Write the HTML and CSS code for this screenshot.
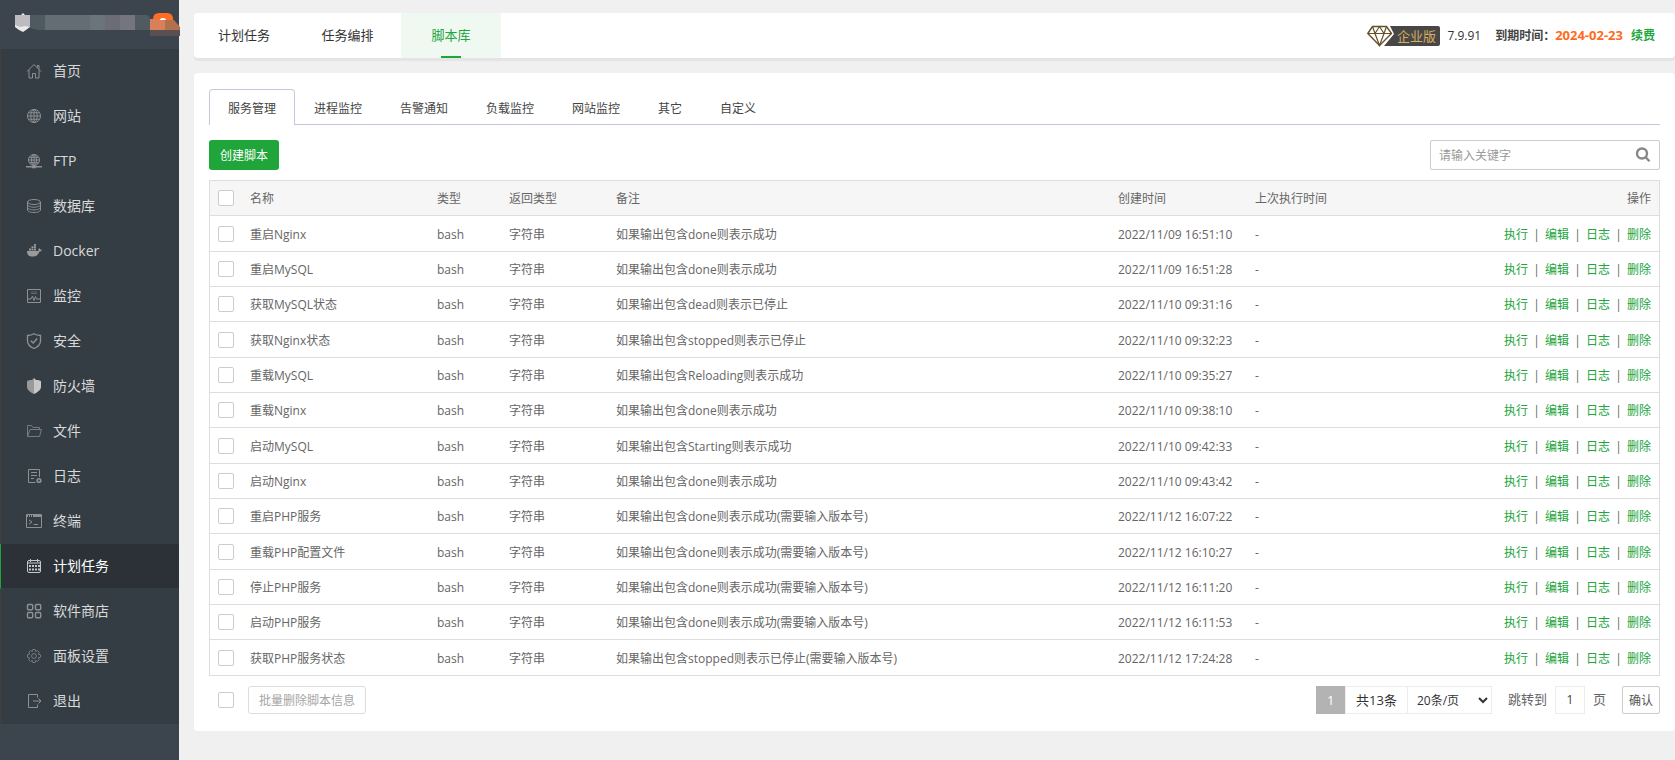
FILE: index.html
```html
<!DOCTYPE html>
<html lang="zh-CN">
<head>
<meta charset="utf-8">
<title>脚本库</title>
<link rel="stylesheet" href="styles.css">
</head>
<body>
<div class="app">
  <aside class="sidebar">
    <header class="brand">
      <svg class="brand-art" viewBox="0 0 180 49" aria-hidden="true">
        <path fill="#e9e9eb" d="M23 13l2 2h5v12l-4 3-3 2-4-2-4-3V15h6z"/>
        <path fill="#bcbbc0" d="M15 15h15v12l-5-1-5 1-5-2z"/>
        <path fill="#4f5960" d="M30 15h15v15H38l-8-2z"/>
        <path fill="#656d74" d="M45 15h45v15H45z"/>
        <path fill="#6b747b" d="M90 15h15v15H90z"/>
        <path fill="#6b6c77" d="M105 15h15v15h-15z"/>
        <path fill="#74757f" d="M120 15h15v15h-15z"/>
        <path fill="#505a62" d="M135 15h13l2 3v12h-15z"/>
        <path fill="#ff6d24" d="M153 19q0-6 6-6h8q6 0 6 6v4h-20z"/>
        <path fill="#fff" d="M160 20q0-2 3-2t3 2z"/>
        <path fill="#d8805a" d="M150 19h9l1 1h5v10h-15z"/>
        <path fill="#b3704d" d="M165 20h9l6 7v3h-15z"/>
        <path fill="#595052" d="M150 30h30v6h-30z"/>
      </svg>
    </header>
    <nav class="menu">
      <a class="menu-item" href="#"><svg class="icon" viewBox="0 0 16 16"><path d="M1 8.500L8 1.500l7 7M3 7v8h3.500v-4.500h3V15H13V7M11.500 4.500V2.500H13V6"/></svg>首页</a>
      <a class="menu-item" href="#"><svg class="icon" viewBox="0 0 16 16"><circle cx="8" cy="8" r="6.500"/><ellipse cx="8" cy="8" rx="3.200" ry="6.500"/><path d="M8 1.500v13M1.500 8h13M2.500 4.800h11M2.500 11.200h11"/></svg>网站</a>
      <a class="menu-item" href="#"><svg class="icon" viewBox="0 0 16 16"><circle cx="8" cy="7" r="5.500"/><ellipse cx="8" cy="7" rx="2.500" ry="5.500"/><path d="M8 1.500v12M2.500 7h11M3.500 4.300h9M3.500 9.700h9"/><path d="M0 13.800h16M6 14.500h4" stroke-width="1.500"/></svg>FTP</a>
      <a class="menu-item" href="#"><svg class="icon" viewBox="0 0 16 16"><ellipse cx="8" cy="4" rx="6.500" ry="2.500"/><path d="M1.500 4v8c0 1.400 3 2.500 6.500 2.500s6.500-1.100 6.500-2.500V4M1.500 6.700C1.500 8 4.500 9.200 8 9.200s6.500-1.200 6.500-2.500M1.500 9.400C1.500 10.700 4.500 11.900 8 11.900s6.500-1.200 6.500-2.500"/></svg>数据库</a>
      <a class="menu-item" href="#"><svg class="icon icon-solid" viewBox="0 0 16 16"><path d="M1 8h10.500c.8 0 1.200-.6 1-2l.8-1 .9 1.600 1.800.2c-.4 1.200-1.200 1.800-2.500 1.800-1.200 3.400-3.500 5-7 5C3 13.600 1 12 1 8zM3 5.500h2v2H3zM5.500 5.500h2v2h-2zM8 5.500h2v2H8zM5.500 3.200h2v1.700h-2zM8 3.200h2v1.700H8zM8 1h2v1.700H8z"/></svg>Docker</a>
      <a class="menu-item" href="#"><svg class="icon" viewBox="0 0 16 16"><path d="M1.500 1.500h13v13h-13zM2 11h3l1.500-3L8 12.500l1.500-4 1 2.500H14"/><path d="M5 4h6M5 5.500h6" opacity=".5"/></svg>监控</a>
      <a class="menu-item" href="#"><svg class="icon" viewBox="0 0 16 16"><path stroke-width="1.300" d="M8 .8c2 1.300 4 1.700 6.500 1.700v5.500c0 3.500-3 6-6.500 7.500C4.500 14 1.500 11.500 1.500 8V2.500C4 2.500 6 2.100 8 .8z"/><path stroke-width="1.500" d="M4.800 7.800L7.200 10l4-4.500"/></svg>安全</a>
      <a class="menu-item" href="#"><svg class="icon icon-solid" viewBox="0 0 16 16"><path d="M8 0L6 2H4L1 3v6c0 3 4 5.500 7 7z"/><path fill="#c7c8ca" d="M8 0l2 2h2l3 1v6c0 3-4 5.500-7 7z"/></svg>防火墙</a>
      <a class="menu-item icon-dim" href="#"><svg class="icon" viewBox="0 0 16 16"><path d="M1.500 13.500v-11h4l1.500 2h6.500v2M1.500 13.500l2.500-7h11.500l-2 7z"/></svg>文件</a>
      <a class="menu-item" href="#"><svg class="icon" viewBox="0 0 16 16"><path d="M9.500 14.500h-7v-13h11V9M5 4.500h6M5 7.500h6M5 10.500h3"/><circle cx="13" cy="12.500" r="1.800" stroke-width="1.600"/></svg>日志</a>
      <a class="menu-item" href="#"><svg class="icon" viewBox="0 0 16 16"><path d="M.5 1.500h15v13H.5zM3 7l3 2-3 2.300M7.500 11.500H12"/><path stroke-width="2" d="M1 3h14" stroke-dasharray="1 1 1 1 1 1 10"/></svg>终端</a>
      <a class="menu-item active" href="#"><svg class="icon" viewBox="0 0 16 16"><rect x="1.500" y="2.500" width="13" height="12" rx="1.500"/><path d="M2 5h12" /><path d="M4.500 1v3M11.500 1v3"/><path stroke-width="2" stroke-dasharray="2 1" d="M3 8h11M3 11.500h11"/></svg>计划任务</a>
      <a class="menu-item" href="#"><svg class="icon" viewBox="0 0 16 16"><g stroke-width="1.400"><rect x="1.500" y="1.500" width="5.200" height="5.200" rx="1"/><rect x="9.500" y="1.500" width="5.200" height="5.200" rx="1"/><rect x="1.500" y="9.500" width="5.200" height="5.200" rx="1"/><rect x="9.500" y="9.500" width="5.200" height="5.200" rx="1"/></g></svg>软件商店</a>
      <a class="menu-item icon-dim" href="#"><svg class="icon" viewBox="0 0 16 16"><path d="M6.800 1.500h2.400l.5 2 1.700-1 1.900 1.900-1 1.700 2.200.7v2.400l-2.200.7 1 1.700-1.900 1.900-1.700-1-.5 2H6.800l-.5-2-1.700 1-1.900-1.900 1-1.700-2.200-.7V6.800l2.200-.7-1-1.700 1.900-1.900 1.700 1z"/><circle cx="8" cy="8" r="2.400"/></svg>面板设置</a>
      <a class="menu-item" href="#"><svg class="icon" viewBox="0 0 16 16"><path d="M11.500 4.500v-3h-9v13h9v-3M7 8h8M12.500 5.500L15 8l-2.500 2.500"/></svg>退出</a>
    </nav>
  </aside>

  <main class="content">
    <header class="topbar">
      <nav class="top-tabs">
        <a class="top-tab" href="#">计划任务</a>
        <a class="top-tab top-tab-wide" href="#">任务编排</a>
        <a class="top-tab active" href="#">脚本库</a>
      </nav>
      <div class="license">
        <svg class="edition" viewBox="0 0 73 22" role="img" aria-label="企业版">
          <path fill="#474746" d="M23 1h48q2 0 2 2v16q0 2-2 2H17l10-12z"/>
          <path fill="#fff" stroke="#665027" stroke-width="1.400" stroke-linejoin="round" d="M5.500 1.500h14l5 7L12.500 20.500.8 8.500z"/>
          <path fill="none" stroke="#665027" stroke-width="1.200" d="M1 8.500h23M5.500 1.500l2.500 7 4.500 12 4.500-12 2.500-7M8 8.500l4.500-7 4.500 7"/>
          <text class="edition-text" x="30" y="16">企业版</text>
        </svg>
        <span class="version">7.9.91</span>
        <span class="expire">到期时间：<b class="expire-date">2024-02-23</b></span>
        <a class="renew" href="#">续费</a>
      </div>
    </header>

    <section class="panel">
      <nav class="tabs">
        <a class="tab active" href="#">服务管理</a>
        <a class="tab" href="#">进程监控</a>
        <a class="tab" href="#">告警通知</a>
        <a class="tab" href="#">负载监控</a>
        <a class="tab" href="#">网站监控</a>
        <a class="tab" href="#">其它</a>
        <a class="tab" href="#">自定义</a>
      </nav>

      <div class="toolbar">
        <button class="btn-create" type="button">创建脚本</button>
        <div class="search">
          <input class="search-input" type="text" placeholder="请输入关键字" aria-label="请输入关键字">
          <button class="search-btn" type="button" aria-label="搜索"><svg class="search-icon" viewBox="0 0 16 16"><circle cx="7" cy="6.500" r="5"/><path d="M10.500 10l4 4.300"/></svg></button>
        </div>
      </div>

      <table class="scripts">
        <colgroup>
          <col class="col-check"><col class="col-name"><col class="col-type"><col class="col-return"><col class="col-note"><col class="col-created"><col class="col-last"><col class="col-ops">
        </colgroup>
        <thead>
          <tr><th><input class="check" type="checkbox" aria-label="全选"></th><th>名称</th><th>类型</th><th>返回类型</th><th>备注</th><th>创建时间</th><th>上次执行时间</th><th class="ops">操作</th></tr>
        </thead>
        <tbody>
          <tr><td><input class="check" type="checkbox" aria-label="重启Nginx"></td><td>重启Nginx</td><td>bash</td><td>字符串</td><td>如果输出包含done则表示成功</td><td>2022/11/09 16:51:10</td><td>-</td><td class="ops"><a href="#">执行</a><i>|</i><a href="#">编辑</a><i>|</i><a href="#">日志</a><i>|</i><a href="#">删除</a></td></tr>
          <tr><td><input class="check" type="checkbox" aria-label="重启MySQL"></td><td>重启MySQL</td><td>bash</td><td>字符串</td><td>如果输出包含done则表示成功</td><td>2022/11/09 16:51:28</td><td>-</td><td class="ops"><a href="#">执行</a><i>|</i><a href="#">编辑</a><i>|</i><a href="#">日志</a><i>|</i><a href="#">删除</a></td></tr>
          <tr><td><input class="check" type="checkbox" aria-label="获取MySQL状态"></td><td>获取MySQL状态</td><td>bash</td><td>字符串</td><td>如果输出包含dead则表示已停止</td><td>2022/11/10 09:31:16</td><td>-</td><td class="ops"><a href="#">执行</a><i>|</i><a href="#">编辑</a><i>|</i><a href="#">日志</a><i>|</i><a href="#">删除</a></td></tr>
          <tr><td><input class="check" type="checkbox" aria-label="获取Nginx状态"></td><td>获取Nginx状态</td><td>bash</td><td>字符串</td><td>如果输出包含stopped则表示已停止</td><td>2022/11/10 09:32:23</td><td>-</td><td class="ops"><a href="#">执行</a><i>|</i><a href="#">编辑</a><i>|</i><a href="#">日志</a><i>|</i><a href="#">删除</a></td></tr>
          <tr><td><input class="check" type="checkbox" aria-label="重载MySQL"></td><td>重载MySQL</td><td>bash</td><td>字符串</td><td>如果输出包含Reloading则表示成功</td><td>2022/11/10 09:35:27</td><td>-</td><td class="ops"><a href="#">执行</a><i>|</i><a href="#">编辑</a><i>|</i><a href="#">日志</a><i>|</i><a href="#">删除</a></td></tr>
          <tr><td><input class="check" type="checkbox" aria-label="重载Nginx"></td><td>重载Nginx</td><td>bash</td><td>字符串</td><td>如果输出包含done则表示成功</td><td>2022/11/10 09:38:10</td><td>-</td><td class="ops"><a href="#">执行</a><i>|</i><a href="#">编辑</a><i>|</i><a href="#">日志</a><i>|</i><a href="#">删除</a></td></tr>
          <tr><td><input class="check" type="checkbox" aria-label="启动MySQL"></td><td>启动MySQL</td><td>bash</td><td>字符串</td><td>如果输出包含Starting则表示成功</td><td>2022/11/10 09:42:33</td><td>-</td><td class="ops"><a href="#">执行</a><i>|</i><a href="#">编辑</a><i>|</i><a href="#">日志</a><i>|</i><a href="#">删除</a></td></tr>
          <tr><td><input class="check" type="checkbox" aria-label="启动Nginx"></td><td>启动Nginx</td><td>bash</td><td>字符串</td><td>如果输出包含done则表示成功</td><td>2022/11/10 09:43:42</td><td>-</td><td class="ops"><a href="#">执行</a><i>|</i><a href="#">编辑</a><i>|</i><a href="#">日志</a><i>|</i><a href="#">删除</a></td></tr>
          <tr><td><input class="check" type="checkbox" aria-label="重启PHP服务"></td><td>重启PHP服务</td><td>bash</td><td>字符串</td><td>如果输出包含done则表示成功(需要输入版本号)</td><td>2022/11/12 16:07:22</td><td>-</td><td class="ops"><a href="#">执行</a><i>|</i><a href="#">编辑</a><i>|</i><a href="#">日志</a><i>|</i><a href="#">删除</a></td></tr>
          <tr><td><input class="check" type="checkbox" aria-label="重载PHP配置文件"></td><td>重载PHP配置文件</td><td>bash</td><td>字符串</td><td>如果输出包含done则表示成功(需要输入版本号)</td><td>2022/11/12 16:10:27</td><td>-</td><td class="ops"><a href="#">执行</a><i>|</i><a href="#">编辑</a><i>|</i><a href="#">日志</a><i>|</i><a href="#">删除</a></td></tr>
          <tr><td><input class="check" type="checkbox" aria-label="停止PHP服务"></td><td>停止PHP服务</td><td>bash</td><td>字符串</td><td>如果输出包含done则表示成功(需要输入版本号)</td><td>2022/11/12 16:11:20</td><td>-</td><td class="ops"><a href="#">执行</a><i>|</i><a href="#">编辑</a><i>|</i><a href="#">日志</a><i>|</i><a href="#">删除</a></td></tr>
          <tr><td><input class="check" type="checkbox" aria-label="启动PHP服务"></td><td>启动PHP服务</td><td>bash</td><td>字符串</td><td>如果输出包含done则表示成功(需要输入版本号)</td><td>2022/11/12 16:11:53</td><td>-</td><td class="ops"><a href="#">执行</a><i>|</i><a href="#">编辑</a><i>|</i><a href="#">日志</a><i>|</i><a href="#">删除</a></td></tr>
          <tr><td><input class="check" type="checkbox" aria-label="获取PHP服务状态"></td><td>获取PHP服务状态</td><td>bash</td><td>字符串</td><td>如果输出包含stopped则表示已停止(需要输入版本号)</td><td>2022/11/12 17:24:28</td><td>-</td><td class="ops"><a href="#">执行</a><i>|</i><a href="#">编辑</a><i>|</i><a href="#">日志</a><i>|</i><a href="#">删除</a></td></tr>
        </tbody>
      </table>

      <footer class="table-footer">
        <div class="batch">
          <input class="check" type="checkbox" aria-label="全选">
          <button class="btn-batch" type="button" disabled>批量删除脚本信息</button>
        </div>
        <div class="pager">
          <span class="page-current">1</span>
          <span class="page-total">共13条</span>
          <select class="page-size" aria-label="每页条数"><option>20条/页</option></select>
          <label class="jump-label" for="jump">跳转到</label>
          <input class="jump-input" id="jump" type="text" value="1">
          <span class="jump-unit">页</span>
          <button class="btn-confirm" type="button">确认</button>
        </div>
      </footer>
    </section>
  </main>
</div>
</body>
</html>
```

FILE: styles.css
```css
* { box-sizing: border-box; }

body {
  margin: 0;
  background: #f0f0f0;
  color: #666;
  font: 12px/18px "Open Sans", "Noto Sans CJK SC", sans-serif;
}

a { color: #20a53a; text-decoration: none; }
button, input, select { font: inherit; color: inherit; margin: 0; }

.app { display: flex; min-height: 100vh; }

/* Sidebar */
.sidebar { flex: none; width: 179px; background: #3c444d; }
.brand { height: 49px; }
.brand-art { display: block; width: 180px; height: 49px; }
.menu { background: #353d44; }
.menu-item {
  display: flex;
  align-items: center;
  gap: 11px;
  height: 45px;
  padding-left: 25px;
  border-left: 1px solid #433f3e;
  border-bottom: 1px solid #353d44;
  color: #d8d9da;
  font-size: 14px;
}
.menu-item.active { background: #2c3138; border-left-color: #20a53a; color: #fff; }
.icon { width: 16px; height: 16px; fill: none; stroke: #8e9194; }
.icon-solid { fill: #989a9c; stroke: none; }
.icon-dim .icon { stroke: #777b7f; }
.active .icon { stroke: #c6c8ca; }

/* Top bar */
.content { flex: 1; min-width: 0; padding: 13px 0 29px 15px; }
.topbar {
  display: flex;
  justify-content: space-between;
  height: 45px;
  border-radius: 4px;
  background: #fff;
  box-shadow: 0 3px 1px #e4e4e4;
}
.top-tabs { display: flex; }
.top-tab {
  display: flex;
  align-items: center;
  justify-content: center;
  position: relative;
  min-width: 100px;
  padding: 0 24px 2px;
  color: #333;
  font-size: 13px;
}
.top-tab-wide { min-width: 107px; }
.top-tab.active { background: #eff8f1; color: #20a53a; }
.top-tab.active::after {
  content: "";
  position: absolute;
  bottom: 0;
  left: 50%;
  width: 20px;
  height: 2px;
  margin-left: -10px;
  background: #20a53a;
}
.license { display: flex; align-items: center; padding-right: 20px; color: #333; }
.edition { width: 73px; height: 22px; margin-right: 7px; }
.edition-text { fill: #d8ac62; font-size: 13px; }
.version { margin-right: 14px; }
.expire { color: #444; font-weight: 600; }
.expire-date { color: #ff6a21; font-size: 13px; font-weight: 700; }
.renew { margin-left: 8px; font-weight: 600; }

/* Panel */
.panel {
  margin-top: 15px;
  padding: 16px 15px 17px;
  border-radius: 4px;
  background: #fff;
}
.tabs { display: flex; height: 36px; border-bottom: 1px solid #c8c6d8; }
.tab {
  height: 36px;
  padding: 10px 18px 0;
  border: 1px solid transparent;
  border-bottom: 0;
  border-radius: 4px 4px 0 0;
  color: #444;
}
.tab.active { border-color: #c8c6d8; background: #fff; }

.toolbar { display: flex; justify-content: space-between; margin: 15px 0 10px; }
.btn-create {
  height: 30px;
  padding: 2px 11px 0;
  border: 0;
  border-radius: 3px;
  background: #20a53a;
  color: #fff;
}
.search {
  display: flex;
  width: 230px;
  height: 30px;
  border: 1px solid #ccc;
  border-radius: 2px;
}
.search-input { flex: 1; min-width: 0; padding: 2px 8px 0; border: 0; outline: 0; background: none; }
.search-input::placeholder { color: #999; }
.search-btn { width: 32px; padding: 0 8px; border: 0; background: none; }
.search-icon { display: block; width: 16px; height: 16px; fill: none; stroke: #888; stroke-width: 2.400; }

/* Table */
.scripts {
  width: 100%;
  border: 1px solid #ddd;
  border-bottom: 0;
  border-spacing: 0;
  table-layout: fixed;
}
.col-check { width: 32px; }
.col-name { width: 187px; }
.col-type { width: 72px; }
.col-return { width: 107px; }
.col-created { width: 137px; }
.col-last { width: 200px; }
.col-ops { width: 212px; }
.scripts th, .scripts td {
  height: 35px;
  padding: 2px 8px 0;
  border-bottom: 1px solid #ddd;
  font-weight: 400;
  text-align: left;
  white-space: nowrap;
}
.scripts th:first-child, .scripts td:first-child { padding-top: 0; }
.scripts th { background: #f6f6f6; }
.scripts tbody tr:nth-child(3n+1) td { height: 36px; }
.scripts .ops { text-align: right; }
.ops i { display: inline-block; width: 17px; font-style: normal; text-align: center; }
.check {
  display: block;
  appearance: none;
  flex: none;
  width: 16px;
  height: 16px;
  border: 1px solid #ccc;
  border-radius: 2px;
  background: #fff;
}
.check:checked { background: #20a53a; }

/* Footer */
.table-footer { display: flex; justify-content: space-between; margin-top: 10px; }
.batch { display: flex; align-items: center; gap: 14px; padding-left: 9px; }
.btn-batch {
  height: 28px;
  padding: 2px 10px 0;
  border: 1px solid #ddd;
  border-radius: 3px;
  background: #fff;
  color: #a5a5a5;
}
.pager { display: flex; height: 28px; line-height: 26px; }
.page-current { width: 29px; background: #b3b3b3; color: #fff; font-size: 13px; line-height: 28px; text-align: center; }
.page-total { padding: 0 10px; border: 1px solid #ececec; color: #333; font-size: 13px; }
.page-size {
  width: 84px;
  padding: 0 0 0 5px;
  border: 1px solid #ececec;
  border-left: 0;
  background: #fff;
  color: #333;
}
.jump-label { margin: 0 8px 0 16px; font-size: 13px; }
.jump-input { width: 30px; padding: 0; border: 1px solid #ececec; color: #444; text-align: center; }
.jump-unit { margin: 0 16px 0 8px; font-size: 13px; }
.btn-confirm {
  width: 38px;
  padding: 2px 0 0;
  border: 1px solid #ccc;
  border-radius: 2px;
  background: #fff;
  color: #555;
  line-height: 18px;
}
```
